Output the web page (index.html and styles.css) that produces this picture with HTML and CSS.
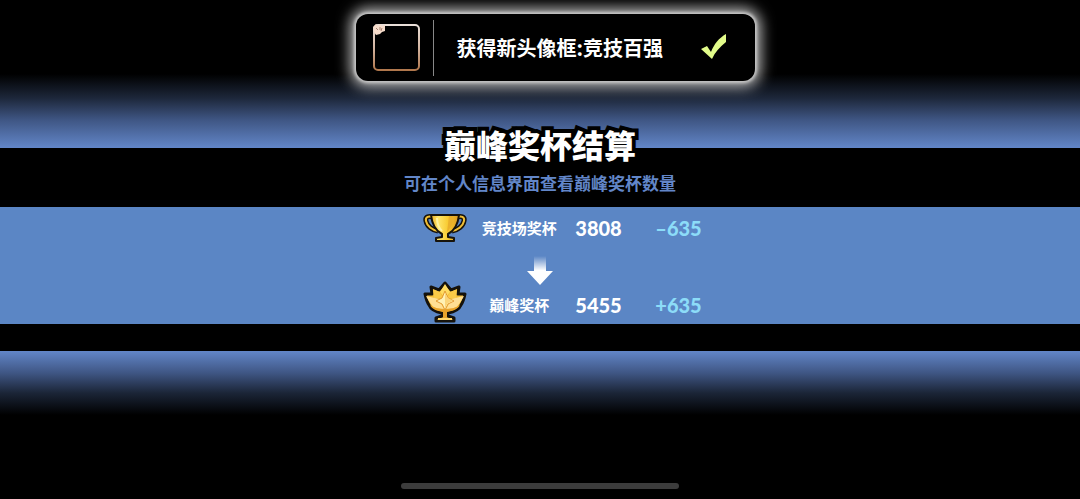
FILE: index.html
```
<!DOCTYPE html>
<html lang="zh-CN">
<head>
  <meta charset="UTF-8">
  <meta name="viewport" content="width=device-width, initial-scale=1.0">
  <title>巅峰奖杯结算</title>
  <link rel="stylesheet" href="styles.css">
</head>
<body>
  <!-- 顶部提示 -->
  <header class="top">
    <div class="toast">
      <svg class="frame" viewBox="0 0 48 48">
        <defs>
          <linearGradient id="frameLine" x1="0" y1="0" x2="0" y2="1">
            <stop offset="0" stop-color="#e9dfd8"/>
            <stop offset="0.5" stop-color="#d3b5a2"/>
            <stop offset="1" stop-color="#b0774c"/>
          </linearGradient>
        </defs>
        <rect x="2" y="1" width="45" height="45" rx="4" fill="#000" stroke="url(#frameLine)" stroke-width="2"/>
        <path d="M1 3l3-3 2 2 2-2 2 2 3-1v6l-3 1-2 2-4 1-2-3z" fill="#f6dccb"/>
        <path d="M4 4l2 2M8 3v3M10 4l-1 3" stroke="#a98472" fill="none"/>
      </svg>
      <p class="toast-text">获得新头像框:竞技百强</p>
      <svg class="check" viewBox="0 0 28 28">
        <path d="M0 15l6-3 4 6C13 10 18 4 25 0v8C19 13 14 18 11 25z" fill="#e2fb8a"/>
      </svg>
    </div>
  </header>

  <!-- 标题 -->
  <section class="caption">
    <h1>巅峰奖杯结算</h1>
    <p>可在个人信息界面查看巅峰奖杯数量</p>
  </section>

  <!-- 奖杯数量 -->
  <main class="result">
    <table class="cups">
      <tr>
        <td class="icon">
          <svg viewBox="0 0 44 42">
            <defs>
              <linearGradient id="gold" x1="0" y1="0" x2="1" y2="0">
                <stop offset="0" stop-color="#e8a91c"/>
                <stop offset="0.25" stop-color="#ffe76c"/>
                <stop offset="0.6" stop-color="#f8cb32"/>
                <stop offset="1" stop-color="#dd991f"/>
              </linearGradient>
            </defs>
            <path d="M11 11C6 8 2 10 3 14c1 5 6 9 12 10M33 11c5-3 9-1 8 3-1 5-6 9-12 10" fill="none" stroke="#17130b" stroke-width="5"/>
            <path d="M11 11C6 8 2 10 3 14c1 5 6 9 12 10M33 11c5-3 9-1 8 3-1 5-6 9-12 10" fill="none" stroke="#efbd34" stroke-width="2"/>
            <path d="M8 8h28c-1 9-5 16-11 19v3l6 1v3H13v-3l6-1v-3C13 24 9 17 8 8z" fill="url(#gold)" stroke="#17130b" stroke-width="2" stroke-linejoin="round"/>
            <path d="M14 11c0 5 1 9 5 13" fill="none" stroke="#fff2a1" stroke-width="2"/>
            <path d="M26 9h5c-1 7-3 12-7 16z" fill="#eab02a"/>
          </svg>
        </td>
        <td class="name">竞技场奖杯</td>
        <td class="count">3808</td>
        <td class="change">–635</td>
      </tr>
      <tr>
        <td class="arrow" colspan="4">
          <svg viewBox="0 0 26 30">
            <defs>
              <linearGradient id="fade" x1="0" y1="0" x2="0" y2="1">
                <stop offset="0" stop-color="#fff" stop-opacity="0"/>
                <stop offset="0.5" stop-color="#fff"/>
              </linearGradient>
            </defs>
            <path d="M7 1h12v15h7L13 30 0 16h7z" fill="url(#fade)"/>
          </svg>
        </td>
      </tr>
      <tr class="peak">
        <td class="icon">
          <svg viewBox="0 0 44 43">
            <path d="M22 2l6 7 8-3-1 7 7 0c-1 5-2 8-4 11-2 5-7 7-13 8v3l6 2v3H13v-3l6-2v-3c-6-1-11-3-13-8-2-3-3-6-4-11l7 0-1-7 8 3z" fill="#f4bd36" stroke="#15120c" stroke-width="3" stroke-linejoin="round"/>
            <path d="M22 3l5 8-5 6-5-6z" fill="#ffdc62"/>
            <path d="M10 8l7 3 3 6-9 0zM34 8l-7 3-3 6 9 0z" fill="#fbc947"/>
            <path d="M3 15l13 3 5 10c-6 0-11-1-13-5-2-3-4-6-5-8zM41 15l-13 3-5 10c6 0 11-1 13-5 2-3 4-6 5-8z" fill="#ffdf93"/>
            <path d="M7 24c4 3 10 4 15 4s11-1 15-4c-2 4-7 6-13 7v6h-4v-6c-6-1-11-3-13-7z" fill="#e8a32b"/>
            <path d="M22 10l3 7 6 3-6 3-3 6-3-6-6-3 6-3z" fill="#fff1b5" stroke="#e39a31"/>
            <path d="M22 12v15l3-5 5-2-5-3z" fill="#fbd57a"/>
            <path d="M15 38h14" stroke="#ffd76c" stroke-width="2"/>
          </svg>
        </td>
        <td class="name">巅峰奖杯</td>
        <td class="count">5455</td>
        <td class="change">+635</td>
      </tr>
    </table>
  </main>

  <footer class="bottom">
    <div class="home-bar"></div>
  </footer>
</body>
</html>
```
FILE: styles.css
```
*{
  margin: 0;
  padding: 0;
  box-sizing: border-box;
}
body{
  min-height: 100vh;
  display: flex;
  flex-direction: column;
  background-color: #000;
  color: #fff;
  font-family: "Noto Sans CJK SC", sans-serif;
}
.top{
  display: flex;
  justify-content: center;
  padding: 14px 0 67px 30px;
  background: linear-gradient(to top, #6286c8 0, #3f5684 28px, #1d273a 50px, #000 74px);
}
.toast{
  display: flex;
  align-items: center;
  width: 100%;
  max-width: 399px;
  min-height: 67px;
  padding: 5px 26px 5px 16px;
  border-radius: 12px;
  background-color: #000;
  box-shadow: 0 0 3px 2px #c4c4c4, 0 0 14px 6px rgba(230, 230, 230, 0.8);
}
.frame{
  width: 48px;
  height: 48px;
}
.toast-text{
  flex: 1;
  margin-left: 13px;
  padding-left: 23px;
  border-left: 1px solid #888;
  font-size: 20px;
  font-weight: 700;
  line-height: 56px;
}
.check{
  width: 28px;
  height: 28px;
}
.caption{
  padding-bottom: 12px;
  text-align: center;
}
.caption h1{
  margin-top: -28px;
  font-size: 32px;
  font-weight: 900;
  line-height: 48px;
  -webkit-text-stroke: 8px #000;
  paint-order: stroke fill;
  stroke-linejoin: round;
}
.caption p{
  margin-top: 3px;
  color: #6286c8;
  font-size: 17px;
  font-weight: 700;
  line-height: 24px;
}
.result{
  display: flex;
  justify-content: center;
  background-color: #5b86c5;
}
.cups{
  margin-left: 45px;
  border-collapse: collapse;
}
.icon{
  width: 44px;
}
.icon svg{
  display: block;
  width: 44px;
  height: 42px;
}
.name{
  width: 108px;
  padding-right: 4px;
  font-size: 15px;
  font-weight: 700;
  line-height: 20px;
  text-align: center;
}
.count, .change{
  font-family: Lato, sans-serif;
  font-size: 20px;
  font-weight: 900;
  line-height: 24px;
}
.count{
  width: 80px;
}
.change{
  color: #8cdcf8;
}
.arrow{
  padding-right: 45px;
}
.arrow svg{
  display: block;
  width: 26px;
  height: 30px;
  margin: 6px auto -4px;
}
.peak .icon svg{
  height: 43px;
}
.peak .name, .peak .count, .peak .change{
  padding-top: 4px;
}
/* 底部渐变 */
.bottom{
  flex: 1;
  display: flex;
  align-items: flex-end;
  justify-content: center;
  margin-top: 27px;
  padding: 80px 16px 10px;
  background: linear-gradient(#6286c8 0, #3f5684 22px, #1b2537 42px, #000 64px);
}
.home-bar{
  width: 278px;
  height: 6px;
  border-radius: 3px;
  background-color: #3c3c3c;
}
```
